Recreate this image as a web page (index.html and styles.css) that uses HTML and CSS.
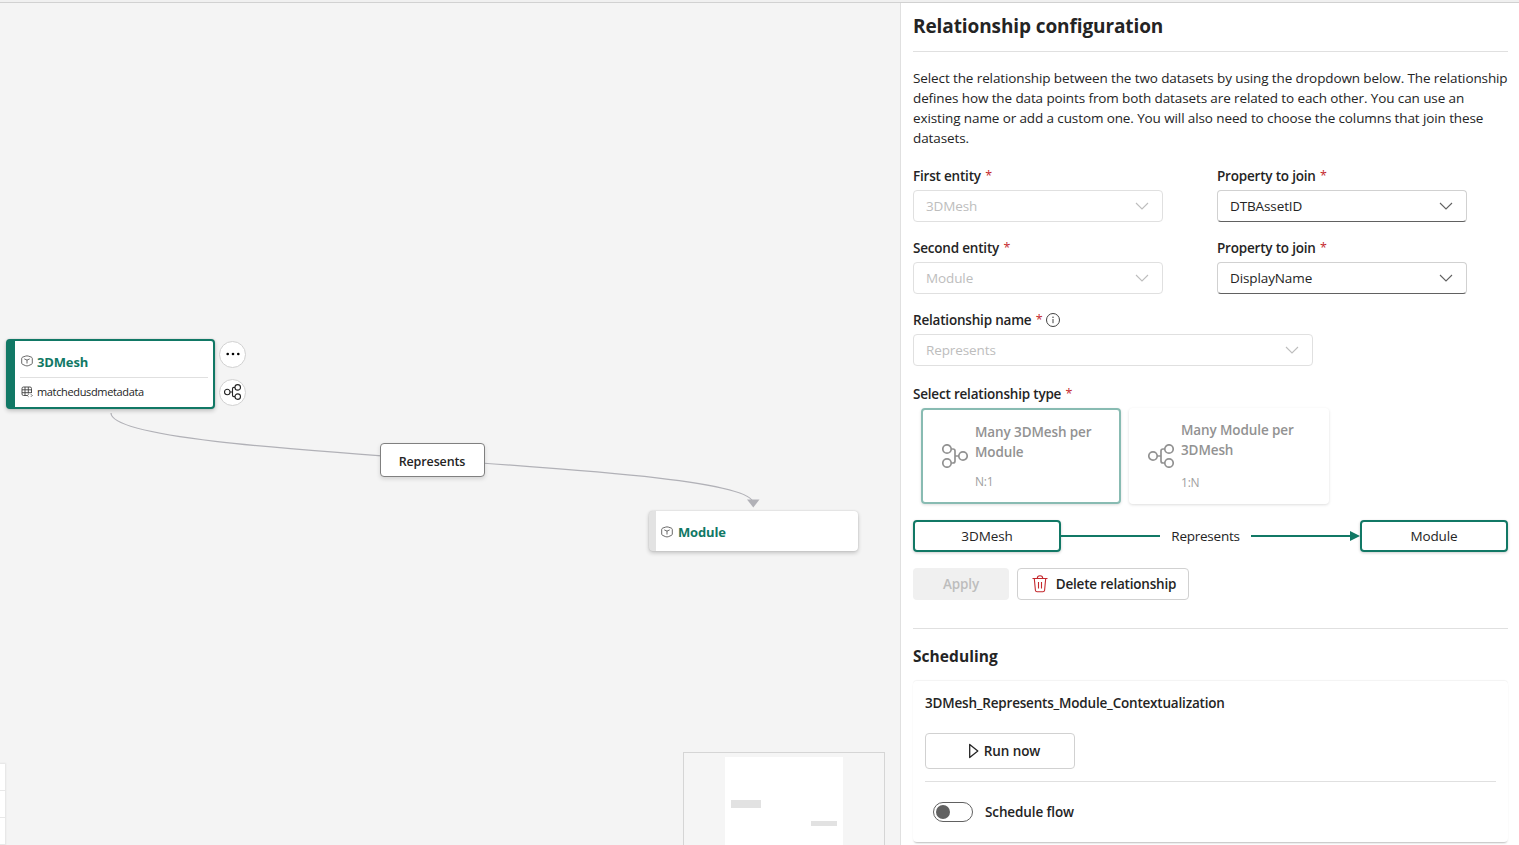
FILE: index.html
```html
<!DOCTYPE html>
<html lang="en">
<head>
<meta charset="utf-8">
<title>Relationship configuration</title>
<link rel="stylesheet" href="styles.css">
</head>
<body>
<svg class="defs" width="0" height="0">
  <symbol id="chevron" viewBox="0 0 14 8"><path d="M1 1l6 6 6-6" fill="none" stroke="currentColor" stroke-width="1.1"/></symbol>
  <symbol id="one-many" viewBox="0 0 26 24"><g fill="none" stroke="currentColor" stroke-width="1.7"><circle cx="5" cy="12" r="4.2"/><circle cx="21" cy="5" r="4.2"/><circle cx="21" cy="19" r="4.2"/><path d="M9.2 12H13M16.8 5H15a2 2 0 0 0-2 2v10a2 2 0 0 0 2 2h1.800"/></g></symbol>
  <symbol id="cube" viewBox="0 0 12 12"><path d="M4.300 1.200Q6 .5 7.700 1.200L10.300 2.100q1 .5 1 1.400v4.500q0 .9-.8 1.300L7.600 10.600Q6 11.300 4.400 10.600L1.500 9.300Q.7 8.900 .7 8V3.500Q.7 2.600 1.700 2.100ZM3.300 3.900 6 5.100 8.700 3.900M6 5.100V8.500" fill="none" stroke="#424242" stroke-width=".8"/></symbol>
</svg>
<div class="topbar"></div>
<main class="workspace">
  <section class="canvas">
    <svg class="edges" width="900" height="842" viewBox="0 3 900 842"><path d="M111 413C111 460 753 460 753 503" fill="none" stroke="#b1b1b7" stroke-width="1.2"/><path d="M747 499.500h12.500l-6.200 8z" fill="#b1b1b7"/></svg>
    <div class="node node-mesh">
      <div class="node-head"><svg class="cube"><use href="#cube"/></svg><span class="node-title mesh-title">3DMesh</span></div>
      <div class="node-row"><svg class="table" viewBox="0 0 12 12"><path d="M6.500 9.500H2.500a1.500 1.500 0 0 1-1.500-1.500V2.500A1.500 1.500 0 0 1 2.500 1h6.500a1.500 1.500 0 0 1 1.500 1.500V7M1 3.800h9.500M1 6.700h9.500M4 1v8.500M7.300 1v6.500M7.500 8.300l-1.200 1.200 1.200 1.200M10 8.300l1.200 1.200-1.200 1.200" fill="none" stroke="#424242" stroke-width=".9"/></svg><span class="node-source">matchedusdmetadata</span></div>
    </div>
    <button class="round more"><svg width="16" height="4" viewBox="0 0 16 4"><circle cx="2.700" cy="2" r="1.300"/><circle cx="8" cy="2" r="1.300"/><circle cx="13.300" cy="2" r="1.300"/></svg></button>
    <button class="round link"><svg width="17" height="16"><use href="#one-many"/></svg></button>
    <div class="edge-label"><span>Represents</span></div>
    <div class="node node-module"><svg class="cube"><use href="#cube"/></svg><span class="node-title">Module</span></div>
    <div class="controls"><i></i><i></i><i></i></div>
    <div class="minimap"><div class="viewport"><i class="mini-a"></i><i class="mini-b"></i></div></div>
  </section>
  <aside class="panel">
    <h1>Relationship configuration</h1>
    <p class="intro"><span>Select the relationship between the two datasets by using the dropdown below. The relationship</span><br><span>defines how the data points from both datasets are related to each other. You can use an</span><br><span>existing name or add a custom one. You will also need to choose the columns that join these</span><br><span>datasets.</span></p>
    <div class="fields">
      <div class="field"><label>First entity <b>*</b></label><div class="select disabled"><span>3DMesh</span><svg><use href="#chevron"/></svg></div></div>
      <div class="field"><label>Property to join <b>*</b></label><div class="select"><span>DTBAssetID</span><svg><use href="#chevron"/></svg></div></div>
      <div class="field"><label>Second entity <b>*</b></label><div class="select disabled"><span>Module</span><svg><use href="#chevron"/></svg></div></div>
      <div class="field"><label>Property to join <b>*</b></label><div class="select"><span>DisplayName</span><svg><use href="#chevron"/></svg></div></div>
    </div>
    <div class="field name-field"><label>Relationship name <b>*</b><svg class="info" viewBox="0 0 16 16"><circle cx="8" cy="8" r="6.500" fill="none" stroke="#424242"/><path d="M8 7v4.200" stroke="#424242"/><circle cx="8" cy="5.200" r=".75" fill="#424242"/></svg></label><div class="select disabled"><span>Represents</span><svg><use href="#chevron"/></svg></div></div>
    <label class="type-label">Select relationship type <b>*</b></label>
    <div class="types">
      <div class="type selected"><svg class="flip"><use href="#one-many"/></svg><div><strong>Many 3DMesh per<br>Module</strong><small>N:1</small></div></div>
      <div class="type"><svg><use href="#one-many"/></svg><div><strong>Many Module per<br>3DMesh</strong><small>1:N</small></div></div>
    </div>
    <div class="relation"><div class="entity">3DMesh</div><div class="line"></div><span class="rel-name">Represents</span><div class="line"></div><div class="arrow"></div><div class="entity">Module</div></div>
    <div class="actions"><button class="apply">Apply</button><button class="delete"><svg width="16" height="18" viewBox="0 0 16 18" fill="none" stroke="#c4282d" stroke-width="1.100"><path d="M.5 3.500h15M5.300 3.300a2.700 2.500 0 0 1 5.400 0M2.300 3.500l1.100 11.800q.2 1.500 1.700 1.500h5.800q1.500 0 1.700-1.500L13.700 3.500M6.500 7v6.500M9.500 7v6.500"/></svg><span>Delete relationship</span></button></div>
    <section class="scheduling">
      <h2>Scheduling</h2>
      <div class="flow-card">
        <div class="flow-name"><span>3DMesh_Represents_Module_Contextualization</span></div>
        <button class="run"><svg width="12" height="16" viewBox="0 0 12 16"><path d="M1.700 1.500v13L9.800 8z" fill="none" stroke="#242424" stroke-width="1.300" stroke-linejoin="round"/></svg><span>Run now</span></button>
        <div class="schedule"><div class="toggle"><i></i></div><span>Schedule flow</span></div>
      </div>
    </section>
  </aside>
</main>
</body>
</html>
```
FILE: styles.css
```css
* { box-sizing: border-box; }
body { margin: 0; width: 1519px; height: 845px; overflow: hidden; font: 13.500px/20px "Open Sans", "Noto Sans", sans-serif; color: #242424; background: #fff; letter-spacing: -.11px; }
button { font: inherit; letter-spacing: inherit; color: inherit; padding: 0; }
span { white-space: nowrap; }
.defs { position: absolute; }
.topbar { height: 3px; background: #f0f0f0; border-bottom: 1px solid #d1d1d1; }
.workspace { display: flex; height: 842px; }
.canvas { width: 900px; position: relative; overflow: hidden; background: #f4f4f4; flex: none; }
.edges { position: absolute; left: 0; top: 0; }
.node { position: absolute; background: #fff; border-radius: 4px; box-shadow: 0 2px 4px #0003, 0 0 2px #0002; }
.node-mesh { left: 6px; top: 336px; width: 209px; height: 70px; border: 2px solid #117865; border-left-width: 9px; padding: 2px 5px 0 5px; }
.node-head { height: 35px; border-bottom: 1px solid #e0e0e0; display: flex; align-items: center; padding: 2px 0 0 1px; gap: 4px; }
.node-row { height: 28px; display: flex; align-items: center; gap: 4px; padding-left: 1px; }
.cube, .table { width: 12px; height: 12px; flex: none; }
.node-title { font-weight: 700; font-size: 13px; letter-spacing: -.15px; color: #117865; }
.mesh-title { padding-top: 2px; }
.node-source { font-size: 11px; letter-spacing: -.35px; }
.node-module { left: 649px; top: 508px; width: 209px; height: 40px; border-left: 7px solid #e3e3e3; display: flex; align-items: center; gap: 5px; padding: 1px 0 0 5px; }
.round { position: absolute; left: 219px; width: 27px; height: 27px; border: 1px solid #d1d1d1; border-radius: 50%; background: #fff; display: flex; align-items: center; justify-content: center; color: #242424; }
.more { top: 338px; padding-bottom: 1px; }
.link { top: 376px; padding-bottom: 1px; }
.edge-label { position: absolute; left: 380px; top: 440px; width: 105px; height: 34px; border: 1.500px solid #808080; border-radius: 4px; background: #fff; box-shadow: 0 2px 4px #0002; display: flex; align-items: center; justify-content: center; font-weight: 600; font-size: 12.500px; padding: 3px 1px 0 0; }
.controls { position: absolute; left: 0; top: 761px; width: 5px; box-shadow: 0 0 2px 1px #0001; }
.controls i { display: block; height: 27px; background: #fff; border-bottom: 1px solid #e8e8e8; }
.minimap { position: absolute; left: 683px; top: 749px; width: 202px; height: 120px; border: 1px solid #d5d5d5; background: #f5f5f5; padding: 4px 0 0 41px; }
.viewport { width: 118px; height: 110px; background: #fff; padding: 43px 6px 0; }
.mini-a, .mini-b { display: block; background: #e2e2e2; }
.mini-a { width: 30px; height: 8px; }
.mini-b { width: 26px; height: 5px; margin: 13px 0 0 auto; }
.panel { flex: 1; border-left: 1px solid #e0e0e0; padding: 0 11px 0 12px; background: #fff; min-width: 0; }
h1 { margin: 0; height: 49px; font-size: 19px; font-weight: 700; letter-spacing: -.1px; line-height: 46px; border-bottom: 1px solid #e0e0e0; }
.intro { margin: 16px 0 18px; }
.fields { display: grid; grid-template-columns: 250px 250px; column-gap: 54px; row-gap: 16px; }
label { display: flex; height: 20px; font-weight: 600; letter-spacing: -.2px; white-space: pre; }
label b { color: #c4282d; font-weight: 400; font-size: 12.500px; margin-left: 1px; }
.field label { margin-bottom: 4px; }
.select { height: 32px; border: 1px solid #d1d1d1; border-bottom-color: #616161; border-radius: 4px; padding: 0 13px 0 12px; display: flex; align-items: center; justify-content: space-between; }
.select svg { width: 14px; height: 8px; color: #616161; }
.disabled { color: #bdbdbd; border-color: #e0e0e0; }
.disabled svg { color: #bdbdbd; }
.name-field { width: 400px; margin-top: 16px; }
.info { width: 16px; height: 16px; margin: 2px 0 0 3px; }
.type-label { margin: 18px 0 4px; }
.types { display: flex; gap: 8px; padding-left: 8px; }
.type { width: 200px; height: 96px; border-radius: 4px; box-shadow: 0 1px 3px #0002; display: flex; padding: 12px 0 0 19px; gap: 7px; color: #929292; }
.type svg { width: 26px; height: 24px; margin-top: 24px; flex: none; }
.type .flip { transform: scaleX(-1); margin-top: 22px; }
.type strong { font-weight: 600; display: block; white-space: nowrap; }
.type small { display: block; font-size: 12px; line-height: 16px; margin-top: 15px; letter-spacing: -.2px; color: #a0a0a0; }
.selected { border: 2px solid #88bbb2; }
.selected small { margin-top: 12px; }
.relation { margin-top: 16px; height: 32px; display: flex; align-items: center; }
.entity { width: 148px; height: 32px; border: 2px solid #117865; border-radius: 4px; text-align: center; line-height: 28px; box-shadow: 0 1px 3px #0003; flex: none; }
.line { height: 2px; width: 99px; background: #117865; flex: none; }
.rel-name { flex: 1; text-align: center; letter-spacing: -.25px; }
.arrow { border: solid transparent; border-width: 5px 0 5px 10px; border-left-color: #117865; flex: none; }
.actions { display: flex; gap: 8px; margin-top: 16px; height: 32px; }
.apply { width: 96px; border: 0; border-radius: 4px; background: #f0f0f0; color: #bdbdbd; font-weight: 600; }
.delete, .run { border: 1px solid #d1d1d1; border-radius: 4px; background: #fff; font-weight: 600; letter-spacing: -.2px; display: flex; align-items: center; justify-content: center; }
.delete { width: 172px; gap: 8px; padding-left: 2px; }
.scheduling { margin-top: 28px; border-top: 1px solid #e0e0e0; }
h2 { margin: 0; padding-top: 17px; height: 52px; font-size: 15.500px; line-height: 21px; font-weight: 700; letter-spacing: .05px; }
.flow-card { height: 161px; border-radius: 4px; box-shadow: 0 2px 2px -1px #0004, 0 -1px 1px #0000000d; padding: 12px; }
.flow-name { height: 40px; font-weight: 600; letter-spacing: -.2px; }
.run { width: 150px; height: 36px; gap: 4px; padding-left: 8px; letter-spacing: -.1px; }
.schedule { margin-top: 12px; border-top: 1px solid #e0e0e0; height: 61px; display: flex; align-items: center; padding-left: 8px; gap: 12px; font-weight: 600; }
.toggle { width: 40px; height: 20px; border: 1px solid #616161; border-radius: 10px; padding: 2px; }
.toggle i { display: block; width: 14px; height: 14px; border-radius: 50%; background: #616161; }
```
